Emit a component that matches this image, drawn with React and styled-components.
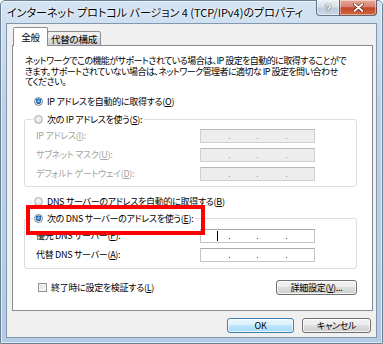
import styled, { createGlobalStyle } from "styled-components";

const GlobalStyle = createGlobalStyle`
  html, body {
    margin: 0;
    padding: 0;
    background: #ffffff;
  }
  body {
    font-family: "Noto Sans CJK JP", "Noto Sans", sans-serif;
    font-feature-settings: "palt" 1;
    color: #000;
  }
  * {
    box-sizing: border-box;
  }
`;

export default function App() {
  return (
    <>
      <GlobalStyle />
      <Window>
        <TitleBar>
          <Title>インターネット プロトコル バージョン 4 (TCP/IPv4)のプロパティ</Title>
          <Caption>
            <HelpButton>?</HelpButton>
            <CloseButton>
              <svg width="11" height="9" viewBox="0 0 11 9">
                <path
                  d="M1.5 1 L9.5 8 M9.5 1 L1.5 8"
                  stroke="#5a1a10"
                  strokeWidth="3"
                  strokeLinecap="round"
                />
                <path
                  d="M1.5 1 L9.5 8 M9.5 1 L1.5 8"
                  stroke="#ffffff"
                  strokeWidth="1.8"
                  strokeLinecap="round"
                />
              </svg>
            </CloseButton>
          </Caption>
        </TitleBar>

        <Client>
          <TabStrip>
            <Tab $active>全般</Tab>
            <Tab>代替の構成</Tab>
          </TabStrip>

          <Panel>
            <Description>
              ネットワークでこの機能がサポートされている場合は、IP 設定を自動的に取得することがで
              <br />
              きます。サポートされていない場合は、ネットワーク管理者に適切な IP 設定を問い合わせ
              <br />
              てください。
            </Description>

            <OptionRow $top={8}>
              <Radio $checked />
              <span>
                IP アドレスを自動的に取得する(<u>O</u>)
              </span>
            </OptionRow>

            <Group>
              <GroupLegend>
                <Radio />
                <span>
                  次の IP アドレスを使う(<u>S</u>):
                </span>
              </GroupLegend>
              <FieldList>
                <FieldRow>
                  <FieldLabel $disabled>
                    IP アドレス(<u>I</u>):
                  </FieldLabel>
                  <IpBox disabled />
                </FieldRow>
                <FieldRow>
                  <FieldLabel $disabled>
                    サブネット マスク(<u>U</u>):
                  </FieldLabel>
                  <IpBox disabled />
                </FieldRow>
                <FieldRow>
                  <FieldLabel $disabled>
                    デフォルト ゲートウェイ(<u>D</u>):
                  </FieldLabel>
                  <IpBox disabled />
                </FieldRow>
              </FieldList>
            </Group>

            <OptionRow $top={9}>
              <Radio />
              <span>
                DNS サーバーのアドレスを自動的に取得する(<u>B</u>)
              </span>
            </OptionRow>

            <Group $top={5}>
              <GroupLegend $marked>
                <Radio $checked />
                <span>
                  次の DNS サーバーのアドレスを使う(<u>E</u>):
                </span>
              </GroupLegend>
              <FieldList $top={4} $bottom={6}>
                <FieldRow>
                  <FieldLabel>
                    優先 DNS サーバー(<u>P</u>):
                  </FieldLabel>
                  <IpBox caret />
                </FieldRow>
                <FieldRow>
                  <FieldLabel>
                    代替 DNS サーバー(<u>A</u>):
                  </FieldLabel>
                  <IpBox />
                </FieldRow>
              </FieldList>
            </Group>

            <CheckRow>
              <CheckLabel>
                <Checkbox />
                <span>
                  終了時に設定を検証する(<u>L</u>)
                </span>
              </CheckLabel>
              <Button $width={81}>
                詳細設定(<u>V</u>)...
              </Button>
            </CheckRow>
          </Panel>

          <Footer>
            <Button $width={67} $default>
              OK
            </Button>
            <Button $width={69}>キャンセル</Button>
          </Footer>
        </Client>
      </Window>
    </>
  );
}

function IpBox({ disabled, caret }) {
  return (
    <IpFrame $disabled={disabled}>
      <Segment>{caret && <Caret />}</Segment>
      <Dot $disabled={disabled} />
      <Segment />
      <Dot $disabled={disabled} />
      <Segment />
      <Dot $disabled={disabled} />
      <Segment />
    </IpFrame>
  );
}

const Window = styled.div`
  width: 383px;
  height: 344px;
  display: flex;
  flex-direction: column;
  padding: 0 5px 5px;
  border: 1px solid #6d8197;
  border-radius: 5px 5px 0 0;
  background: linear-gradient(180deg, #d3e3f3 0%, #bcd2ea 30%, #b4cbe5 100%);
  box-shadow: inset 0 0 0 1px rgba(255, 255, 255, 0.55);
`;

const TitleBar = styled.div`
  height: 22px;
  display: flex;
  justify-content: space-between;
  align-items: flex-start;
`;

const Title = styled.div`
  padding-left: 1px;
  font-size: 11px;
  line-height: 22px;
  white-space: nowrap;
  text-shadow: 0 0 5px rgba(255, 255, 255, 0.95), 0 0 2px #ffffff;
`;

const Caption = styled.div`
  display: flex;
  margin-top: -1px;
`;

const CaptionButton = styled.div`
  height: 16px;
  display: flex;
  align-items: center;
  justify-content: center;
  border: 1px solid rgba(52, 72, 96, 0.7);
  border-top: none;
  box-shadow: inset 0 0 0 1px rgba(255, 255, 255, 0.45);
`;

const HelpButton = styled(CaptionButton)`
  width: 23px;
  border-right: none;
  border-radius: 0 0 0 4px;
  background: linear-gradient(180deg, #e9eef4 0%, #d6dfe9 48%, #bccadb 52%, #cbd8e6 100%);
  font-family: "Liberation Sans", sans-serif;
  font-size: 11px;
  font-weight: bold;
  color: #ffffff;
  text-shadow: 0 0 1px #3c4a5c, 0 0 1px #3c4a5c;
`;

const CloseButton = styled(CaptionButton)`
  width: 38px;
  border-radius: 0 0 4px 0;
  background: linear-gradient(180deg, #e9a99b 0%, #d88170 45%, #c2452b 52%, #d2663f 100%);
`;

const Client = styled.div`
  flex: 1;
  display: flex;
  flex-direction: column;
  padding: 3px 3px 0 5px;
  border: 1px solid #8297ad;
  background: #f0f0f0;
  font-size: 9px;
  letter-spacing: -0.3px;
`;

const TabStrip = styled.div`
  position: relative;
  z-index: 1;
  height: 19px;
  margin-bottom: -1px;
  padding-left: 1px;
  display: flex;
  align-items: flex-end;
`;

const Tab = styled.div`
  height: ${(p) => (p.$active ? "19px" : "15px")};
  width: ${(p) => (p.$active ? "35px" : "54px")};
  margin-left: ${(p) => (p.$active ? "0" : "-1px")};
  display: flex;
  align-items: center;
  justify-content: center;
  padding-bottom: ${(p) => (p.$active ? "1px" : "0")};
  border: 1px solid #898c95;
  border-bottom: ${(p) => (p.$active ? "none" : "1px solid #898c95")};
  border-radius: 2px 2px 0 0;
  background: ${(p) =>
    p.$active
      ? "#ffffff"
      : "linear-gradient(180deg, #f2f2f2 0%, #ebebeb 50%, #dddddd 50%, #cfcfcf 100%)"};
  font-size: 9.6px;
  white-space: nowrap;
`;

const Panel = styled.div`
  height: 266px;
  padding: 10px 15px 0 11px;
  border: 1px solid #898c95;
  background: #ffffff;
  display: flex;
  flex-direction: column;
`;

const Description = styled.p`
  margin: 0 0 0 1px;
  line-height: 10.5px;
  letter-spacing: -0.55px;
  white-space: nowrap;
`;

const OptionRow = styled.div`
  height: 12px;
  margin-top: ${(p) => p.$top ?? 10}px;
  margin-left: 10px;
  display: flex;
  align-items: center;
  gap: 4px;
  white-space: nowrap;
`;

const Radio = styled.span`
  width: 9px;
  height: 9px;
  flex-shrink: 0;
  border-radius: 50%;
  border: 1px solid ${(p) => (p.$checked ? "#7a8590" : "#a9b0b6")};
  background: ${(p) =>
    p.$checked
      ? "radial-gradient(circle at 50% 45%, #9fd3f5 0, #3b86cf 1.6px, #1f5c9e 2.6px, #e3e6ea 2.8px, #f6f6f6 100%)"
      : "radial-gradient(circle at 50% 40%, #f7f7f7 0, #e4e4e4 60%, #d6d6d6 100%)"};
`;

const Group = styled.fieldset`
  margin: ${(p) => p.$top ?? 6}px 0 0;
  padding: 0;
  border: 1px solid #d5dfe5;
  border-radius: 3px;
  min-width: 0;
`;

const GroupLegend = styled.legend`
  position: relative;
  z-index: 2;
  height: 12px;
  margin-left: 8px;
  padding: 0 2px 0 1px;
  display: flex;
  align-items: center;
  gap: 4px;
  white-space: nowrap;

  &::after {
    content: "";
    display: ${(p) => (p.$marked ? "block" : "none")};
    position: absolute;
    left: -7px;
    right: -10px;
    top: -8px;
    bottom: -10px;
    border: 4px solid #ff0000;
  }
`;

const FieldList = styled.div`
  padding: ${(p) => p.$top ?? 3}px 0 ${(p) => p.$bottom ?? 5}px 11px;
  display: flex;
  flex-direction: column;
  gap: 5px;
`;

const FieldRow = styled.div`
  height: 14px;
  display: grid;
  grid-template-columns: 164px 115px;
  align-items: center;
`;

const FieldLabel = styled.span`
  color: ${(p) => (p.$disabled ? "#a2a2a2" : "#000000")};
  white-space: nowrap;
`;

const IpFrame = styled.div`
  height: 14px;
  display: flex;
  padding: 0 1px;
  border: 1px solid ${(p) => (p.$disabled ? "#cfcfcf" : "#c2c6cc")};
  border-top-color: ${(p) => (p.$disabled ? "#b9b9b9" : "#a6abb3")};
  background: ${(p) => (p.$disabled ? "#ededed" : "#ffffff")};
`;

const Segment = styled.span`
  flex: 1;
  display: flex;
  align-items: center;
  justify-content: center;
`;

const Dot = styled.span`
  align-self: flex-end;
  width: 1px;
  height: 1px;
  margin: 0 1px 3px;
  background: ${(p) => (p.$disabled ? "#9a9a9a" : "#444444")};
`;

const Caret = styled.span`
  width: 1px;
  height: 10px;
  margin-left: 6px;
  background: #000000;
`;

const CheckRow = styled.div`
  margin-top: 11px;
  padding-left: 14px;
  display: flex;
  justify-content: space-between;
  align-items: center;
`;

const CheckLabel = styled.label`
  display: flex;
  align-items: center;
  gap: 4px;
  white-space: nowrap;
`;

const Checkbox = styled.span`
  width: 9px;
  height: 9px;
  border: 1px solid #8e8f8f;
  background: linear-gradient(135deg, #d9d9d9 0%, #f0f0f0 60%, #fbfbfb 100%);
  box-shadow: inset 0 0 0 1px #f4f4f4;
`;

const Button = styled.div`
  width: ${(p) => p.$width}px;
  height: 15px;
  display: flex;
  align-items: center;
  justify-content: center;
  border: 1px solid ${(p) => (p.$default ? "#3c7fb1" : "#707070")};
  border-radius: 3px;
  background: ${(p) =>
    p.$default
      ? "linear-gradient(180deg, #eaf6fd 0%, #d9f0fc 50%, #bee6fd 50%, #a7d9f5 100%)"
      : "linear-gradient(180deg, #f2f2f2 0%, #ebebeb 50%, #dddddd 50%, #cfcfcf 100%)"};
  box-shadow: inset 0 0 0 1px rgba(255, 255, 255, 0.75);
  white-space: nowrap;
`;

const Footer = styled.div`
  padding: 7px 2px 0 0;
  display: flex;
  justify-content: flex-end;
  gap: 8px;
`;
